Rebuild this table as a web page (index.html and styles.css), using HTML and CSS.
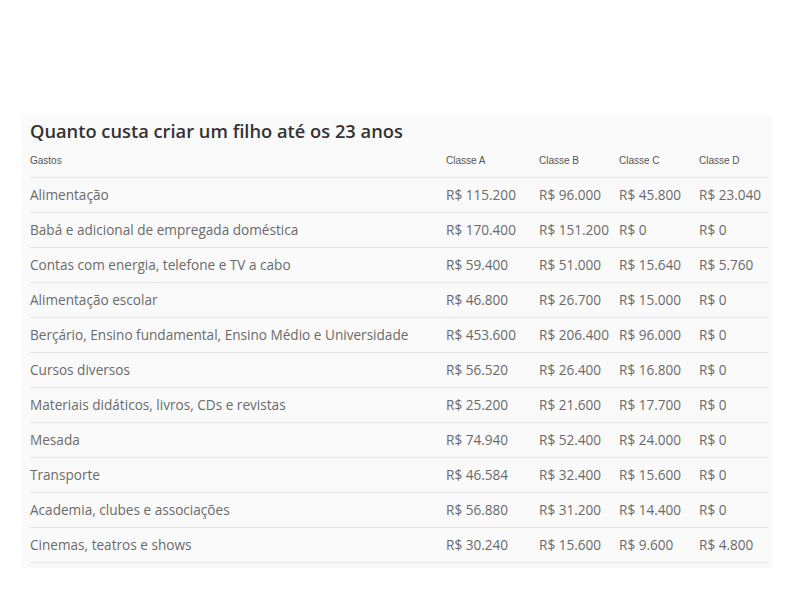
FILE: index.html
```html
<!DOCTYPE html>
<html lang="pt-BR">
<head>
<meta charset="utf-8">
<title>Quanto custa criar um filho até os 23 anos</title>
<link rel="stylesheet" href="styles.css">
</head>
<body>
<div class="page">
  <div class="card">
    <h2 class="title">Quanto custa criar um filho até os 23 anos</h2>
    <table class="costs">
      <colgroup>
        <col class="c-name"><col class="c-a"><col class="c-b"><col class="c-c"><col class="c-d">
      </colgroup>
      <thead>
        <tr><th>Gastos</th><th>Classe A</th><th>Classe B</th><th>Classe C</th><th>Classe D</th></tr>
      </thead>
      <tbody>
        <tr><td>Alimentação</td><td>R$ 115.200</td><td>R$ 96.000</td><td>R$ 45.800</td><td>R$ 23.040</td></tr>
        <tr><td>Babá e adicional de empregada doméstica</td><td>R$ 170.400</td><td>R$ 151.200</td><td>R$ 0</td><td>R$ 0</td></tr>
        <tr><td>Contas com energia, telefone e TV a cabo</td><td>R$ 59.400</td><td>R$ 51.000</td><td>R$ 15.640</td><td>R$ 5.760</td></tr>
        <tr><td>Alimentação escolar</td><td>R$ 46.800</td><td>R$ 26.700</td><td>R$ 15.000</td><td>R$ 0</td></tr>
        <tr><td>Berçário, Ensino fundamental, Ensino Médio e Universidade</td><td>R$ 453.600</td><td>R$ 206.400</td><td>R$ 96.000</td><td>R$ 0</td></tr>
        <tr><td>Cursos diversos</td><td>R$ 56.520</td><td>R$ 26.400</td><td>R$ 16.800</td><td>R$ 0</td></tr>
        <tr><td>Materiais didáticos, livros, CDs e revistas</td><td>R$ 25.200</td><td>R$ 21.600</td><td>R$ 17.700</td><td>R$ 0</td></tr>
        <tr><td>Mesada</td><td>R$ 74.940</td><td>R$ 52.400</td><td>R$ 24.000</td><td>R$ 0</td></tr>
        <tr><td>Transporte</td><td>R$ 46.584</td><td>R$ 32.400</td><td>R$ 15.600</td><td>R$ 0</td></tr>
        <tr><td>Academia, clubes e associações</td><td>R$ 56.880</td><td>R$ 31.200</td><td>R$ 14.400</td><td>R$ 0</td></tr>
        <tr><td>Cinemas, teatros e shows</td><td>R$ 30.240</td><td>R$ 15.600</td><td>R$ 9.600</td><td>R$ 4.800</td></tr>
      </tbody>
    </table>
  </div>
</div>
</body>
</html>
```

FILE: styles.css
```css
html, body {
  margin: 0;
  padding: 0;
  background: #ffffff;
}

.page {
  padding: 115px 28px 0 21px;
}

.card {
  width: 751px;
  background: #fafafa;
  padding: 3px 0 5px 9px;
  box-sizing: border-box;
}

.title {
  margin: 0;
  font-family: "Open Sans", sans-serif;
  font-weight: 600;
  font-size: 18.3px;
  line-height: 25px;
  color: #333333;
}

.costs {
  border-collapse: collapse;
  table-layout: fixed;
  width: 738px;
}

.c-name { width: 416px; }
.c-a { width: 93px; }
.c-b { width: 80px; }
.c-c { width: 80px; }
.c-d { width: 69px; }

.costs th {
  font-family: "Liberation Sans", Arial, sans-serif;
  font-weight: normal;
  font-size: 10px;
  color: #555555;
  text-align: left;
  height: 34px;
  padding: 0;
  border-bottom: 1px solid #e4e4e4;
  vertical-align: middle;
}

.costs td {
  font-family: "Open Sans", sans-serif;
  font-size: 13.6px;
  color: #6a6a6a;
  height: 32px;
  padding: 0 0 2px 0;
  border-bottom: 1px solid #e4e4e4;
  vertical-align: middle;
  white-space: nowrap;
}
```
